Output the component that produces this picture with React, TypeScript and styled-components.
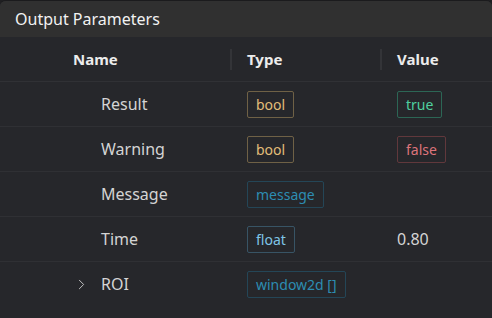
import { Fragment } from "react";
import styled, { createGlobalStyle } from "styled-components";
import { ChevronRight } from "lucide-react";

const GlobalStyle = createGlobalStyle`
  html, body {
    margin: 0;
    padding: 0;
    background: #1f1f21;
  }
  body {
    font-family: "Noto Sans", "Open Sans", sans-serif;
  }
`;

const Panel = styled.section`
  width: 492px;
  height: 318px;
  box-sizing: border-box;
  border-top: 1px solid #1b1b1d;
  border-radius: 6px 6px 0 0;
  overflow: hidden;
  background: #26272b;
  display: flex;
  flex-direction: column;
`;

const TitleBar = styled.header`
  height: 36px;
  display: flex;
  align-items: center;
  padding-left: 15px;
  background: #303030;
  color: #f2f2f2;
  font-size: 16px;
`;

const Table = styled.div`
  display: grid;
  grid-template-columns: 230px 150px 1fr;
`;

const HeadCell = styled.div<{ $indent: number }>`
  height: 44px;
  display: flex;
  align-items: center;
  gap: 15px;
  padding-left: ${(p) => p.$indent}px;
  border-bottom: 1px solid #303135;
  color: #ececec;
  font-size: 15px;
  font-weight: 700;
`;

const Divider = styled.span`
  width: 2px;
  height: 21px;
  background: #333438;
`;

const Cell = styled.div<{ $indent: number; $last?: boolean }>`
  height: 44px;
  display: flex;
  align-items: center;
  padding-left: ${(p) => p.$indent}px;
  border-bottom: 1px solid ${(p) => (p.$last ? "transparent" : "#2f3034")};
  color: #d4d4d4;
  font-size: 16px;
`;

const Toggle = styled.span`
  width: 28px;
  display: flex;
  align-items: center;
  color: #c0c0c0;
`;

const tones = {
  bool: { fg: "#e2bd79", border: "#6f6146" },
  true: { fg: "#4fcf9f", border: "#2c6655" },
  false: { fg: "#dc747b", border: "#61383c" },
  dim: { fg: "#2d8db2", border: "#244657" },
  float: { fg: "#7fc4e6", border: "#385465" },
};

type Tone = keyof typeof tones;

const Badge = styled.span<{ $tone: Tone }>`
  height: 27px;
  box-sizing: border-box;
  display: inline-flex;
  align-items: center;
  padding: 0 8px;
  border: 1px solid ${(p) => tones[p.$tone].border};
  border-radius: 2px;
  color: ${(p) => tones[p.$tone].fg};
  font-size: 14px;
`;

interface Param {
  name: string;
  type: string;
  typeTone: Tone;
  value?: string;
  valueTone?: Tone;
  expandable?: boolean;
}

const params: Param[] = [
  { name: "Result", type: "bool", typeTone: "bool", value: "true", valueTone: "true" },
  { name: "Warning", type: "bool", typeTone: "bool", value: "false", valueTone: "false" },
  { name: "Message", type: "message", typeTone: "dim" },
  { name: "Time", type: "float", typeTone: "float", value: "0.80" },
  { name: "ROI", type: "window2d []", typeTone: "dim", expandable: true },
];

function App() {
  return (
    <>
      <GlobalStyle />
      <Panel>
        <TitleBar>Output Parameters</TitleBar>
        <Table>
          <HeadCell $indent={73}>Name</HeadCell>
          <HeadCell $indent={0}>
            <Divider />
            Type
          </HeadCell>
          <HeadCell $indent={0}>
            <Divider />
            Value
          </HeadCell>
          {params.map((p, i) => {
            const last = i === params.length - 1;
            return (
              <Fragment key={p.name}>
                <Cell $indent={73} $last={last}>
                  <Toggle>{p.expandable && <ChevronRight size={17} strokeWidth={1.4} />}</Toggle>
                  {p.name}
                </Cell>
                <Cell $indent={17} $last={last}>
                  <Badge $tone={p.typeTone}>{p.type}</Badge>
                </Cell>
                <Cell $indent={17} $last={last}>
                  {p.value && p.valueTone ? <Badge $tone={p.valueTone}>{p.value}</Badge> : p.value}
                </Cell>
              </Fragment>
            );
          })}
        </Table>
      </Panel>
    </>
  );
}

export default App;
